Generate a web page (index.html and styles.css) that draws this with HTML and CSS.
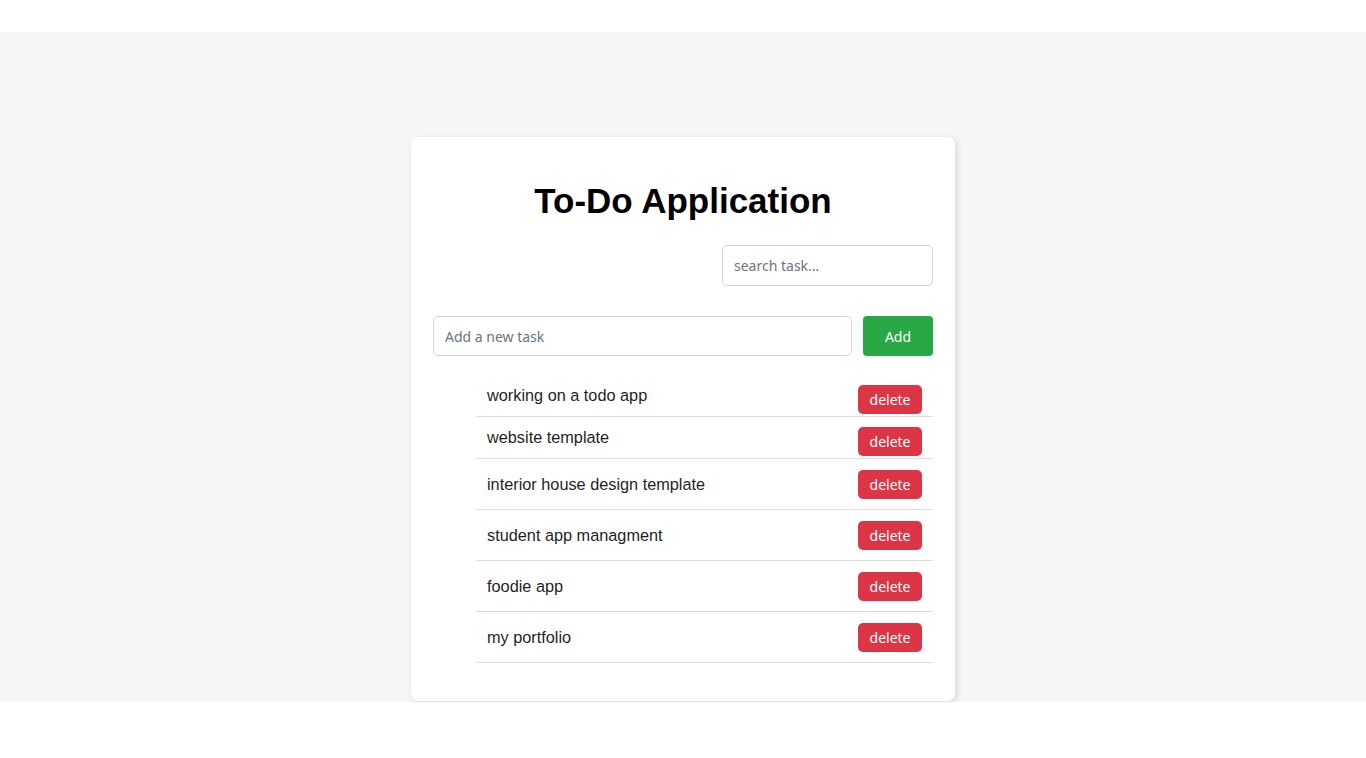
FILE: index.html
```html
<!DOCTYPE html>
<html lang="en">
<head>
<meta charset="utf-8">
<title>To-Do Application</title>
<link rel="stylesheet" href="styles.css">
</head>
<body>
<main class="page">
  <section class="card">
    <h1 class="title">To-Do Application</h1>
    <div class="search-row">
      <input class="field search" type="text" placeholder="search task...">
    </div>
    <form class="add-row">
      <input class="field grow" type="text" placeholder="Add a new task">
      <button class="btn add" type="button">Add</button>
    </form>
    <ul class="tasks">
      <li class="task top"><span class="task-text">working on a todo app</span><button class="btn del" type="button">delete</button></li>
      <li class="task top"><span class="task-text">website template</span><button class="btn del" type="button">delete</button></li>
      <li class="task mid"><span class="task-text">interior house design template</span><button class="btn del" type="button">delete</button></li>
      <li class="task mid"><span class="task-text">student app managment</span><button class="btn del" type="button">delete</button></li>
      <li class="task mid"><span class="task-text">foodie app</span><button class="btn del" type="button">delete</button></li>
      <li class="task mid"><span class="task-text">my portfolio</span><button class="btn del" type="button">delete</button></li>
    </ul>
  </section>
</main>
</body>
</html>
```
FILE: styles.css
```css
* { box-sizing: border-box; }

body {
  margin: 0;
  background: #ffffff;
  font-family: "Liberation Sans", Arial, sans-serif;
  color: #212529;
}

.page {
  margin-top: 32px;
  background: #f6f6f6;
  padding: 105px 0 1px;
  overflow: hidden;
}

.card {
  width: 544px;
  margin: 0 auto;
  padding: 20px 22px 38px;
  background: #ffffff;
  border-radius: 8px;
  box-shadow: 2px 2px 6px rgba(0, 0, 0, 0.12);
}

.title {
  margin: 24px 0 24px;
  font-family: "Liberation Sans", Arial, sans-serif;
  font-weight: 700;
  font-size: 35px;
  line-height: 40px;
  text-align: center;
  color: #000000;
}

.search-row {
  display: flex;
  justify-content: flex-end;
}

.field {
  height: 40px;
  padding: 0 11px;
  border: 1px solid #ced4da;
  border-radius: 5px;
  background: #fff;
  font-family: "Noto Sans", sans-serif;
  font-size: 14px;
  color: #495057;
  outline: none;
}

.field::placeholder { color: #6c757d; }

.search {
  width: 211px;
  height: 41px;
}

.add-row {
  display: flex;
  gap: 11px;
  margin: 30px 0 0;
}

.grow { flex: 1; }

.btn {
  border: none;
  color: #ffffff;
  font-family: "Noto Sans", sans-serif;
  font-size: 14px;
  cursor: pointer;
  padding: 0;
}

.add {
  width: 70px;
  height: 40px;
  background: #28a745;
  border-radius: 4px;
}

.tasks {
  list-style: none;
  margin: 19px 0 0;
  padding: 0 0 0 43px;
}

.task {
  display: flex;
  justify-content: space-between;
  border-bottom: 1px solid #dcdcdc;
  padding-left: 11px;
  padding-right: 11px;
}

.task.top {
  align-items: flex-start;
  padding-top: 10px;
  padding-bottom: 2px;
}

.task.top .task-text {
  line-height: 20px;
}

.task.mid {
  align-items: center;
  padding-top: 11px;
  padding-bottom: 10px;
}

.task.mid .task-text {
  margin-bottom: 2px;
}

.task-text {
  font-size: 16.3px;
  line-height: 20px;
  color: #1f1f1f;
}

.del {
  width: 64px;
  height: 29px;
  background: #dc3545;
  border-radius: 5px;
}
```
